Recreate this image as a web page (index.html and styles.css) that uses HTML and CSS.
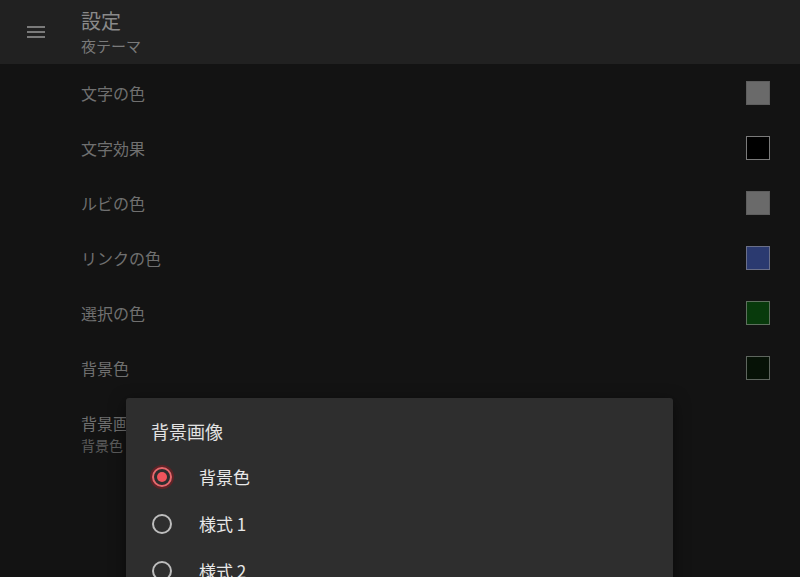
FILE: index.html
```html
<html>

<head>
  <meta name="viewport" content="width=device-width, initial-scale=1.0">
  <link rel="stylesheet" href="styles.css">
</head>

<body>
  <div id="header">
    <div class="menu_btn">
      <span></span>
      <span></span>
      <span></span>
    </div>
    <div class="titles">
      <div class="title">設定</div>
      <div class="subtitle">夜テーマ</div>
    </div>
  </div>
  <div id="list">
    <div class="row">
      <span class="label">文字の色</span>
      <span class="swatch sw_text"></span>
    </div>
    <div class="row">
      <span class="label">文字効果</span>
      <span class="swatch sw_effect"></span>
    </div>
    <div class="row">
      <span class="label">ルビの色</span>
      <span class="swatch sw_ruby"></span>
    </div>
    <div class="row">
      <span class="label">リンクの色</span>
      <span class="swatch sw_link"></span>
    </div>
    <div class="row">
      <span class="label">選択の色</span>
      <span class="swatch sw_select"></span>
    </div>
    <div class="row">
      <span class="label">背景色</span>
      <span class="swatch sw_back"></span>
    </div>
    <div class="row row_two">
      <div>
        <div class="label">背景画像</div>
        <div class="sublabel">背景色</div>
      </div>
    </div>
  </div>

  <div id="dialog">
    <div class="dlg_title">背景画像</div>
    <div class="option">
      <span class="radio checked"></span>
      <span>背景色</span>
    </div>
    <div class="option">
      <span class="radio"></span>
      <span>様式 1</span>
    </div>
    <div class="option">
      <span class="radio"></span>
      <span>様式 2</span>
    </div>
  </div>
</body>

</html>
```

FILE: styles.css
```css
* {
  box-sizing: border-box;
}

body {
  margin: 0;
  padding: 0;
  background-color: #131313;
  font-family: "Noto Sans CJK JP", "Noto Sans", sans-serif;
  overflow: hidden;
}

#header {
  display: flex;
  align-items: center;
  height: 64px;
  background-color: #212121;
}

.menu_btn {
  display: flex;
  flex-direction: column;
  gap: 3px;
  width: 18px;
  margin-left: 27px;
  margin-right: 36px;
}

.menu_btn span {
  display: block;
  height: 2px;
  background-color: #7a7a7a;
}

.titles {
  display: flex;
  flex-direction: column;
  margin-top: 1px;
}

.title {
  color: #8a8a8a;
  font-size: 20px;
  line-height: 26px;
}

.subtitle {
  color: #7a7a7a;
  font-size: 15px;
  line-height: 24px;
}

#list {
  padding-top: 1px;
}

.row {
  display: flex;
  align-items: center;
  justify-content: space-between;
  height: 55px;
  padding-left: 81px;
  padding-right: 30px;
}

.row_two {
  height: 82px;
  padding-bottom: 5px;
}

.label {
  color: #707070;
  font-size: 16px;
  line-height: 22px;
}

.sublabel {
  color: #5c5c5c;
  font-size: 14px;
  line-height: 22px;
}

.swatch {
  width: 24px;
  height: 24px;
  border: 1px solid #7a7a7a;
}

.sw_text {
  background-color: #6a6a6a;
  border-color: #5e5e5e;
}

.sw_effect {
  background-color: #000000;
}

.sw_ruby {
  background-color: #6a6a6a;
  border-color: #5e5e5e;
}

.sw_link {
  background-color: #2b3a70;
  border-color: #6a6f88;
}

.sw_select {
  background-color: #083a0c;
  border-color: #5e705e;
}

.sw_back {
  background-color: #061206;
  border-color: #5e665e;
}

#dialog {
  position: absolute;
  left: 126px;
  top: 398px;
  width: 547px;
  height: 220px;
  background-color: #2e2e2e;
  border-radius: 3px;
  padding: 19px 0 0 25px;
  box-shadow: 0 4px 16px rgba(0, 0, 0, 0.5);
}

.dlg_title {
  color: #e2e2e2;
  font-size: 18px;
  line-height: 28px;
  margin-bottom: 8px;
}

.option {
  display: flex;
  align-items: center;
  height: 47px;
  color: #e8e8e8;
  font-size: 17px;
}

.radio {
  width: 20px;
  height: 20px;
  border: 2px solid #bdbdbd;
  border-radius: 50%;
  margin-left: 1px;
  margin-right: 27px;
  flex-shrink: 0;
  position: relative;
}

.radio.checked {
  border-color: #e8676c;
  box-shadow: 0 0 0 2px rgba(120, 30, 35, 0.7);
}

.radio.checked::after {
  content: "";
  position: absolute;
  left: 3px;
  top: 3px;
  width: 10px;
  height: 10px;
  border-radius: 50%;
  background-color: #f0545c;
}
```
